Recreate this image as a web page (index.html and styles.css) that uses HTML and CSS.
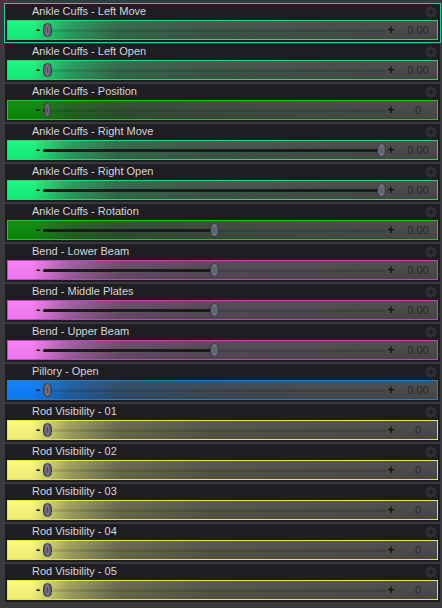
FILE: index.html
```html
<!DOCTYPE html>
<html lang="en">
<head>
  <meta charset="UTF-8" />
  <title>Morphs</title>
  <link rel="stylesheet" href="styles.css">
</head>
<body>
  <div class="morphs">
    <div class="morph green sel">
      <div class="name">Ankle Cuffs - Left Move</div>
      <svg class="gear" viewBox="0 0 12 12"><path d="M5 0h2l.3 1.6 1.2.5 1.3-.9 1.4 1.4-.9 1.3.5 1.2L12 5v2l-1.6.3-.5 1.2.9 1.3-1.4 1.4-1.3-.9-1.2.5L7 12H5l-.3-1.6-1.2-.5-1.3.9-1.4-1.4.9-1.3-.5-1.2L0 7V5l1.6-.3.5-1.2-.9-1.3 1.4-1.4 1.3.9 1.2-.5z M6 4a2 2 0 1 0 .01 0z"/></svg>
      <div class="bar">
        <span class="minus">-</span>
        <div class="track" style="--v:0"><span class="fill"></span><span class="thumb"></span></div>
        <span class="plus">+</span>
        <span class="val">0.00</span>
      </div>
    </div>
    <div class="morph green">
      <div class="name">Ankle Cuffs - Left Open</div>
      <svg class="gear" viewBox="0 0 12 12"><path d="M5 0h2l.3 1.6 1.2.5 1.3-.9 1.4 1.4-.9 1.3.5 1.2L12 5v2l-1.6.3-.5 1.2.9 1.3-1.4 1.4-1.3-.9-1.2.5L7 12H5l-.3-1.6-1.2-.5-1.3.9-1.4-1.4.9-1.3-.5-1.2L0 7V5l1.6-.3.5-1.2-.9-1.3 1.4-1.4 1.3.9 1.2-.5z M6 4a2 2 0 1 0 .01 0z"/></svg>
      <div class="bar">
        <span class="minus">-</span>
        <div class="track" style="--v:0"><span class="fill"></span><span class="thumb"></span></div>
        <span class="plus">+</span>
        <span class="val">0.00</span>
      </div>
    </div>
    <div class="morph dkgreen">
      <div class="name">Ankle Cuffs - Position</div>
      <svg class="gear" viewBox="0 0 12 12"><path d="M5 0h2l.3 1.6 1.2.5 1.3-.9 1.4 1.4-.9 1.3.5 1.2L12 5v2l-1.6.3-.5 1.2.9 1.3-1.4 1.4-1.3-.9-1.2.5L7 12H5l-.3-1.6-1.2-.5-1.3.9-1.4-1.4.9-1.3-.5-1.2L0 7V5l1.6-.3.5-1.2-.9-1.3 1.4-1.4 1.3.9 1.2-.5z M6 4a2 2 0 1 0 .01 0z"/></svg>
      <div class="bar">
        <span class="minus">-</span>
        <div class="track" style="--v:0"><span class="fill"></span><span class="thumb slim"></span></div>
        <span class="plus">+</span>
        <span class="val">0</span>
      </div>
    </div>
    <div class="morph green">
      <div class="name">Ankle Cuffs - Right Move</div>
      <svg class="gear" viewBox="0 0 12 12"><path d="M5 0h2l.3 1.6 1.2.5 1.3-.9 1.4 1.4-.9 1.3.5 1.2L12 5v2l-1.6.3-.5 1.2.9 1.3-1.4 1.4-1.3-.9-1.2.5L7 12H5l-.3-1.6-1.2-.5-1.3.9-1.4-1.4.9-1.3-.5-1.2L0 7V5l1.6-.3.5-1.2-.9-1.3 1.4-1.4 1.3.9 1.2-.5z M6 4a2 2 0 1 0 .01 0z"/></svg>
      <div class="bar">
        <span class="minus">-</span>
        <div class="track" style="--v:1"><span class="fill"></span><span class="thumb"></span></div>
        <span class="plus">+</span>
        <span class="val">0.00</span>
      </div>
    </div>
    <div class="morph green">
      <div class="name">Ankle Cuffs - Right Open</div>
      <svg class="gear" viewBox="0 0 12 12"><path d="M5 0h2l.3 1.6 1.2.5 1.3-.9 1.4 1.4-.9 1.3.5 1.2L12 5v2l-1.6.3-.5 1.2.9 1.3-1.4 1.4-1.3-.9-1.2.5L7 12H5l-.3-1.6-1.2-.5-1.3.9-1.4-1.4.9-1.3-.5-1.2L0 7V5l1.6-.3.5-1.2-.9-1.3 1.4-1.4 1.3.9 1.2-.5z M6 4a2 2 0 1 0 .01 0z"/></svg>
      <div class="bar">
        <span class="minus">-</span>
        <div class="track" style="--v:1"><span class="fill"></span><span class="thumb"></span></div>
        <span class="plus">+</span>
        <span class="val">0.00</span>
      </div>
    </div>
    <div class="morph dkgreen">
      <div class="name">Ankle Cuffs - Rotation</div>
      <svg class="gear" viewBox="0 0 12 12"><path d="M5 0h2l.3 1.6 1.2.5 1.3-.9 1.4 1.4-.9 1.3.5 1.2L12 5v2l-1.6.3-.5 1.2.9 1.3-1.4 1.4-1.3-.9-1.2.5L7 12H5l-.3-1.6-1.2-.5-1.3.9-1.4-1.4.9-1.3-.5-1.2L0 7V5l1.6-.3.5-1.2-.9-1.3 1.4-1.4 1.3.9 1.2-.5z M6 4a2 2 0 1 0 .01 0z"/></svg>
      <div class="bar">
        <span class="minus">-</span>
        <div class="track" style="--v:0.5"><span class="fill"></span><span class="thumb"></span></div>
        <span class="plus">+</span>
        <span class="val">0.00</span>
      </div>
    </div>
    <div class="morph pink">
      <div class="name">Bend - Lower Beam</div>
      <svg class="gear" viewBox="0 0 12 12"><path d="M5 0h2l.3 1.6 1.2.5 1.3-.9 1.4 1.4-.9 1.3.5 1.2L12 5v2l-1.6.3-.5 1.2.9 1.3-1.4 1.4-1.3-.9-1.2.5L7 12H5l-.3-1.6-1.2-.5-1.3.9-1.4-1.4.9-1.3-.5-1.2L0 7V5l1.6-.3.5-1.2-.9-1.3 1.4-1.4 1.3.9 1.2-.5z M6 4a2 2 0 1 0 .01 0z"/></svg>
      <div class="bar">
        <span class="minus">-</span>
        <div class="track" style="--v:0.5"><span class="fill"></span><span class="thumb"></span></div>
        <span class="plus">+</span>
        <span class="val">0.00</span>
      </div>
    </div>
    <div class="morph pink">
      <div class="name">Bend - Middle Plates</div>
      <svg class="gear" viewBox="0 0 12 12"><path d="M5 0h2l.3 1.6 1.2.5 1.3-.9 1.4 1.4-.9 1.3.5 1.2L12 5v2l-1.6.3-.5 1.2.9 1.3-1.4 1.4-1.3-.9-1.2.5L7 12H5l-.3-1.6-1.2-.5-1.3.9-1.4-1.4.9-1.3-.5-1.2L0 7V5l1.6-.3.5-1.2-.9-1.3 1.4-1.4 1.3.9 1.2-.5z M6 4a2 2 0 1 0 .01 0z"/></svg>
      <div class="bar">
        <span class="minus">-</span>
        <div class="track" style="--v:0.5"><span class="fill"></span><span class="thumb"></span></div>
        <span class="plus">+</span>
        <span class="val">0.00</span>
      </div>
    </div>
    <div class="morph pink">
      <div class="name">Bend - Upper Beam</div>
      <svg class="gear" viewBox="0 0 12 12"><path d="M5 0h2l.3 1.6 1.2.5 1.3-.9 1.4 1.4-.9 1.3.5 1.2L12 5v2l-1.6.3-.5 1.2.9 1.3-1.4 1.4-1.3-.9-1.2.5L7 12H5l-.3-1.6-1.2-.5-1.3.9-1.4-1.4.9-1.3-.5-1.2L0 7V5l1.6-.3.5-1.2-.9-1.3 1.4-1.4 1.3.9 1.2-.5z M6 4a2 2 0 1 0 .01 0z"/></svg>
      <div class="bar">
        <span class="minus">-</span>
        <div class="track" style="--v:0.5"><span class="fill"></span><span class="thumb"></span></div>
        <span class="plus">+</span>
        <span class="val">0.00</span>
      </div>
    </div>
    <div class="morph blue">
      <div class="name">Pillory - Open</div>
      <svg class="gear" viewBox="0 0 12 12"><path d="M5 0h2l.3 1.6 1.2.5 1.3-.9 1.4 1.4-.9 1.3.5 1.2L12 5v2l-1.6.3-.5 1.2.9 1.3-1.4 1.4-1.3-.9-1.2.5L7 12H5l-.3-1.6-1.2-.5-1.3.9-1.4-1.4.9-1.3-.5-1.2L0 7V5l1.6-.3.5-1.2-.9-1.3 1.4-1.4 1.3.9 1.2-.5z M6 4a2 2 0 1 0 .01 0z"/></svg>
      <div class="bar">
        <span class="minus">-</span>
        <div class="track" style="--v:0"><span class="fill"></span><span class="thumb"></span></div>
        <span class="plus">+</span>
        <span class="val">0.00</span>
      </div>
    </div>
    <div class="morph yellow">
      <div class="name">Rod Visibility - 01</div>
      <svg class="gear" viewBox="0 0 12 12"><path d="M5 0h2l.3 1.6 1.2.5 1.3-.9 1.4 1.4-.9 1.3.5 1.2L12 5v2l-1.6.3-.5 1.2.9 1.3-1.4 1.4-1.3-.9-1.2.5L7 12H5l-.3-1.6-1.2-.5-1.3.9-1.4-1.4.9-1.3-.5-1.2L0 7V5l1.6-.3.5-1.2-.9-1.3 1.4-1.4 1.3.9 1.2-.5z M6 4a2 2 0 1 0 .01 0z"/></svg>
      <div class="bar">
        <span class="minus">-</span>
        <div class="track" style="--v:0"><span class="fill"></span><span class="thumb"></span></div>
        <span class="plus">+</span>
        <span class="val">0</span>
      </div>
    </div>
    <div class="morph yellow">
      <div class="name">Rod Visibility - 02</div>
      <svg class="gear" viewBox="0 0 12 12"><path d="M5 0h2l.3 1.6 1.2.5 1.3-.9 1.4 1.4-.9 1.3.5 1.2L12 5v2l-1.6.3-.5 1.2.9 1.3-1.4 1.4-1.3-.9-1.2.5L7 12H5l-.3-1.6-1.2-.5-1.3.9-1.4-1.4.9-1.3-.5-1.2L0 7V5l1.6-.3.5-1.2-.9-1.3 1.4-1.4 1.3.9 1.2-.5z M6 4a2 2 0 1 0 .01 0z"/></svg>
      <div class="bar">
        <span class="minus">-</span>
        <div class="track" style="--v:0"><span class="fill"></span><span class="thumb"></span></div>
        <span class="plus">+</span>
        <span class="val">0</span>
      </div>
    </div>
    <div class="morph yellow">
      <div class="name">Rod Visibility - 03</div>
      <svg class="gear" viewBox="0 0 12 12"><path d="M5 0h2l.3 1.6 1.2.5 1.3-.9 1.4 1.4-.9 1.3.5 1.2L12 5v2l-1.6.3-.5 1.2.9 1.3-1.4 1.4-1.3-.9-1.2.5L7 12H5l-.3-1.6-1.2-.5-1.3.9-1.4-1.4.9-1.3-.5-1.2L0 7V5l1.6-.3.5-1.2-.9-1.3 1.4-1.4 1.3.9 1.2-.5z M6 4a2 2 0 1 0 .01 0z"/></svg>
      <div class="bar">
        <span class="minus">-</span>
        <div class="track" style="--v:0"><span class="fill"></span><span class="thumb"></span></div>
        <span class="plus">+</span>
        <span class="val">0</span>
      </div>
    </div>
    <div class="morph yellow">
      <div class="name">Rod Visibility - 04</div>
      <svg class="gear" viewBox="0 0 12 12"><path d="M5 0h2l.3 1.6 1.2.5 1.3-.9 1.4 1.4-.9 1.3.5 1.2L12 5v2l-1.6.3-.5 1.2.9 1.3-1.4 1.4-1.3-.9-1.2.5L7 12H5l-.3-1.6-1.2-.5-1.3.9-1.4-1.4.9-1.3-.5-1.2L0 7V5l1.6-.3.5-1.2-.9-1.3 1.4-1.4 1.3.9 1.2-.5z M6 4a2 2 0 1 0 .01 0z"/></svg>
      <div class="bar">
        <span class="minus">-</span>
        <div class="track" style="--v:0"><span class="fill"></span><span class="thumb"></span></div>
        <span class="plus">+</span>
        <span class="val">0</span>
      </div>
    </div>
    <div class="morph yellow">
      <div class="name">Rod Visibility - 05</div>
      <svg class="gear" viewBox="0 0 12 12"><path d="M5 0h2l.3 1.6 1.2.5 1.3-.9 1.4 1.4-.9 1.3.5 1.2L12 5v2l-1.6.3-.5 1.2.9 1.3-1.4 1.4-1.3-.9-1.2.5L7 12H5l-.3-1.6-1.2-.5-1.3.9-1.4-1.4.9-1.3-.5-1.2L0 7V5l1.6-.3.5-1.2-.9-1.3 1.4-1.4 1.3.9 1.2-.5z M6 4a2 2 0 1 0 .01 0z"/></svg>
      <div class="bar">
        <span class="minus">-</span>
        <div class="track" style="--v:0"><span class="fill"></span><span class="thumb"></span></div>
        <span class="plus">+</span>
        <span class="val">0</span>
      </div>
    </div>
  </div>
</body>
</html>
```

FILE: styles.css
```css
body {
  margin: 0;
  background: #3a3a3d;
  font-family: "Liberation Sans", Arial, sans-serif;
}
.morphs {
  display: flex;
  flex-direction: column;
  gap: 2px;
  padding: 4px 2px 0 5px;
}

/* one morph: name line + slider bar */
.morph {
  position: relative;
  height: 38px;
  padding: 0 2px;
  background: #1e1d22;
  box-sizing: border-box;
}
.morph.sel {
  outline: 1px solid #34c6a8;
}
.green   { --c: #16f67e; --b: #2bd66a; }
.dkgreen { --c: #098a0a; --b: #22c422; }
.pink    { --c: #f77ef7; --b: #c241c2; }
.blue    { --c: #0c7efb; --b: #207dc4; }
.yellow  { --c: #fafa7d; --b: #e6e648; }

.name {
  height: 16px;
  padding-left: 25px;
  font-size: 11px;
  line-height: 15px;
  color: #d6d6d6;
}
.gear {
  position: absolute;
  top: 2px;
  right: 3px;
  width: 12px;
  height: 12px;
  fill: #2f2f33;
  fill-rule: evenodd;
}

.bar {
  display: flex;
  align-items: center;
  height: 20px;
  border: 1px solid var(--b);
  box-sizing: border-box;
  padding-left: 28px;
  background:
    linear-gradient(to bottom, rgba(255,255,255,0.04), rgba(0,0,0,0.06)),
    linear-gradient(to right,
      var(--c) 0,
      var(--c) 24px,
      color-mix(in srgb, var(--c) 55%, #363838) 60px,
      color-mix(in srgb, var(--c) 25%, #383a3a) 110px,
      color-mix(in srgb, var(--c) 10%, #414242) 200px,
      color-mix(in srgb, var(--c) 4%, #474747) 300px,
      #484848 100%);
}
.minus {
  width: 6px;
  font-size: 13px;
  font-weight: bold;
  line-height: 12px;
  color: #101010;
}
.track {
  position: relative;
  flex: 1;
  height: 14px;
  margin-left: 1px;
  --w: 9px;
}
.track::before {
  content: "";
  position: absolute;
  left: 0;
  right: 0;
  top: 6px;
  height: 3px;
  border-radius: 2px;
  background: rgba(0, 0, 0, 0.1);
}
.fill {
  position: absolute;
  left: 0;
  top: 6px;
  height: 3px;
  border-radius: 2px;
  width: calc(var(--v) * (100% - var(--w)) + 4px);
  background: #1b1b1b;
}
.thumb {
  position: absolute;
  top: 0;
  left: calc(var(--v) * (100% - var(--w)));
  width: var(--w);
  height: 14px;
  box-sizing: border-box;
  border: 1px solid #3a3a42;
  border-radius: 5px;
  background:
    radial-gradient(circle at 50% 35%, #4a4a55 0.6px, transparent 1px),
    radial-gradient(circle at 50% 50%, #4a4a55 0.6px, transparent 1px),
    radial-gradient(circle at 50% 65%, #4a4a55 0.6px, transparent 1px),
    linear-gradient(to right, #5a5a66, #77778a 50%, #5a5a66);
}
.thumb.slim {
  width: 7px;
  margin-left: 1px;
  opacity: 0.85;
}
.plus {
  width: 8px;
  margin: 0 4px 0 1px;
  text-align: center;
  font-size: 12px;
  font-weight: bold;
  line-height: 12px;
  color: #101010;
}
.val {
  width: 38px;
  text-align: center;
  font-size: 11px;
  color: #2a2a2a;
}
```
